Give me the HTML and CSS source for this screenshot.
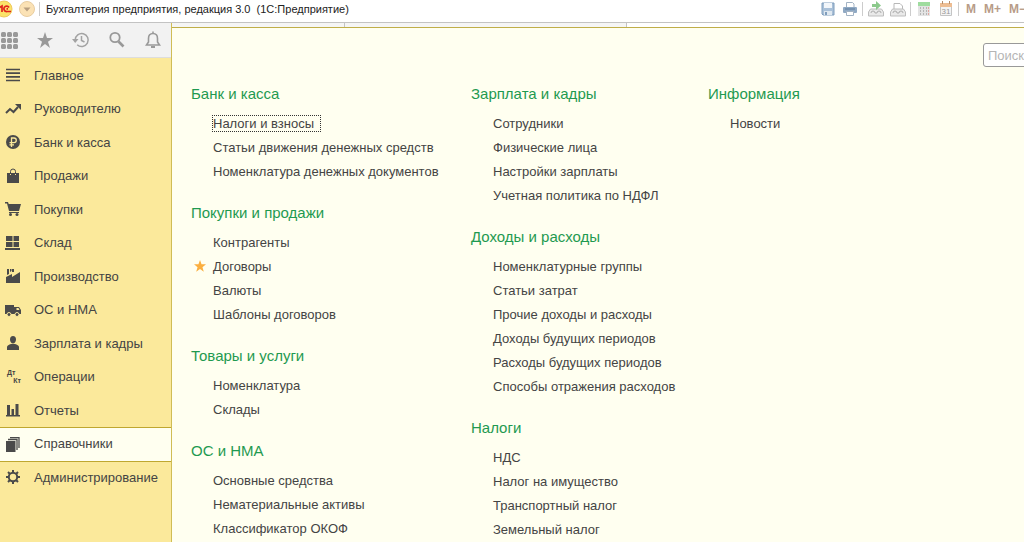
FILE: index.html
```html
<!DOCTYPE html>
<html lang="ru">
<head>
    <meta charset="UTF-8">
    <meta name="viewport" content="width=device-width, initial-scale=1.0">
    <title>Бухгалтерия предприятия</title>
    <link rel="stylesheet" href="styles.css">
</head>
<body>
<header class="titlebar">
    <svg class="logo" width="18" height="18" viewBox="0 0 18 18">
        <circle cx="9" cy="9" r="8" fill="#fbe36a" stroke="#f0c95c"/>
        <path d="M4.500 7.500L7 6v6M14 7.500a2.700 2.700 0 1 0-2 4h4M13 8.800h-1.500" fill="none" stroke="#e0231c" stroke-width="1.700"/>
    </svg>
    <button class="menu-btn" aria-label="Меню">
        <svg width="16" height="16" viewBox="0 0 16 16">
            <circle cx="8" cy="8" r="7.500" fill="#fbe2b5" stroke="#e8cda0"/>
            <path d="M4.500 6.500h7L8 10.500z" fill="#b89f80"/>
        </svg>
    </button>
    <span class="sep"></span>
    <h1>Бухгалтерия предприятия, редакция 3.0 &nbsp;(1С:Предприятие)</h1>
    <div class="tools">
        <button aria-label="Сохранить">
            <svg width="16" height="16" viewBox="0 0 16 16">
                <path d="M2 2h12v12H3l-1-1z" fill="#a9c0d8" stroke="#7f9dbc"/>
                <path d="M4 2h8v5H4z" fill="#f2f6fa"/>
                <path d="M4 10h8v4H4z" fill="#dfe8f0"/>
                <path d="M5 11h2v3H5z" fill="#7f9dbc"/>
            </svg>
        </button>
        <button aria-label="Печать">
            <svg width="16" height="16" viewBox="0 0 16 16">
                <path d="M4.500 6V1.500h6l1.500 1.500v3" fill="#fff" stroke="#a3b3c4"/>
                <rect x="1" y="6" width="14" height="6" rx="1" fill="#90a9c4"/>
                <path d="M3 8h10" stroke="#5d7b9b"/>
                <path d="M4.500 10.500h7v4h-7z" fill="#fff" stroke="#a3b3c4"/>
            </svg>
        </button>
        <span class="sep"></span>
        <button aria-label="Добавить в избранное">
            <svg width="16" height="16" viewBox="0 0 16 16">
                <path d="M2.500 8h11l2 3v4H.5v-4z" fill="#e9e9e9" stroke="#bdbdbd"/>
                <path d="M3 12a2 2 0 0 1 4 0h2a2 2 0 0 1 4 0" fill="none" stroke="#adadad"/>
                <path d="M4 3h4V0l5 4.500L8 9V6H4z" fill="#8cc98c"/>
            </svg>
        </button>
        <button aria-label="Ссылка">
            <svg width="16" height="16" viewBox="0 0 16 16">
                <path d="M4 9V2.500h6L12.500 5v4" fill="#fff" stroke="#b8b8b8"/>
                <path d="M2.500 8h11l2 3v4H.5v-4z" fill="#e9e9e9" stroke="#bdbdbd"/>
                <path d="M3 12a2 2 0 0 1 4 0h2a2 2 0 0 1 4 0" fill="none" stroke="#adadad"/>
            </svg>
        </button>
        <span class="sep"></span>
        <button aria-label="Калькулятор">
            <svg width="16" height="16" viewBox="0 0 16 16">
                <path d="M2 1h12v14H2z" fill="#e3e3e3"/>
                <path d="M2 1h12v4H2z" fill="#9fdc9f"/>
                <path d="M4.500 6v8M7.500 6v8M10.500 6v8" stroke="#b5b5b5" stroke-dasharray="2 1"/>
                <path d="M12.500 6v8" stroke="#e2a6a0" stroke-dasharray="2 1"/>
            </svg>
        </button>
        <button aria-label="Календарь">
            <svg width="16" height="16" viewBox="0 0 16 16">
                <path d="M2.500 2.500h11v12h-11z" fill="#f4f4f4" stroke="#c4c4c4"/>
                <path d="M2 2h12v4H2z" fill="#edbd93"/>
                <path d="M4.500 0v3M11.500 0v3" stroke="#b58d6c"/>
                <text x="8" y="13" class="cal-day">31</text>
            </svg>
        </button>
        <span class="sep"></span>
        <button class="mem">M</button>
        <button class="mem">M+</button>
        <button class="mem">M−</button>
    </div>
</header>

<div class="layout">
    <aside class="sidebar">
        <div class="quick">
            <button aria-label="Функции">
                <svg width="18" height="18" viewBox="0 0 18 18" fill="#999">
                    <rect x="1" y="1" width="5" height="5" rx="1.500"/><rect x="7" y="1" width="5" height="5" rx="1.500"/><rect x="13" y="1" width="5" height="5" rx="1.500"/>
                    <rect x="1" y="7" width="5" height="5" rx="1.500"/><rect x="7" y="7" width="5" height="5" rx="1.500"/><rect x="13" y="7" width="5" height="5" rx="1.500"/>
                    <rect x="1" y="13" width="5" height="5" rx="1.500"/><rect x="7" y="13" width="5" height="5" rx="1.500"/><rect x="13" y="13" width="5" height="5" rx="1.500"/>
                </svg>
            </button>
            <button aria-label="Избранное">
                <svg width="18" height="18" viewBox="0 0 18 18"><path d="M9 1l2 6h6l-5 3.700 2 6.300-5-3.900L4 17l2-6.300L1 7h6z" fill="#999"/></svg>
            </button>
            <button aria-label="История">
                <svg width="18" height="18" viewBox="0 0 18 18" fill="none" stroke="#a3a3a3" stroke-width="1.500">
                    <path d="M3.200 9a6.500 6.500 0 1 1 2 4.700M9.500 5v4.500l3 1.500"/>
                    <path d="M0 8h6.500L3.200 12z" fill="#a3a3a3" stroke="none"/>
                </svg>
            </button>
            <button aria-label="Поиск">
                <svg width="18" height="18" viewBox="0 0 18 18" fill="none" stroke="#999">
                    <circle cx="7" cy="6.500" r="4.700" stroke-width="1.800"/><path d="M10.500 10.500l5 5" stroke-width="2.600"/>
                </svg>
            </button>
            <button aria-label="Уведомления">
                <svg width="18" height="18" viewBox="0 0 18 18" fill="none" stroke="#999" stroke-width="1.600">
                    <path d="M9 2.500c-3 0-4.500 2-4.500 5V11L2.500 14h13l-2-3V7.500c0-3-1.500-5-4.500-5zM9 .5v2"/><path d="M7 16h4" stroke-width="2"/>
                </svg>
            </button>
        </div>
        <nav class="nav">
            <a href="#"><svg viewBox="0 0 16 16"><path d="M1 2.500h14M1 6.200h14M1 9.800h14M1 13.500h14" stroke="#4a4a4a" stroke-width="1.700"/></svg>Главное</a>
            <a href="#"><svg viewBox="0 0 16 16"><path d="M1 12l4-4 3.500 3L13 6" fill="none" stroke="#4a4a4a" stroke-width="2"/><path d="M10 3h6v6z"/></svg>Руководителю</a>
            <a href="#"><svg viewBox="0 0 16 16"><circle cx="8" cy="8" r="7"/><path d="M6.500 13V4H9a2.300 2.300 0 0 1 0 4.600H4.500M4.500 10.800H9" fill="none" stroke="#fbe99b" stroke-width="1.300"/></svg>Банк и касса</a>
            <a href="#"><svg viewBox="0 0 16 16"><path d="M2 5h3v2h1V5h4v2h1V5h3v10H2z"/><path d="M5.500 6V3.500a2.500 2.500 0 0 1 5 0V6" fill="none" stroke="#4a4a4a"/></svg>Продажи</a>
            <a href="#"><svg viewBox="0 0 16 16"><path d="M0 1h3l.7 2H16l-2 7H4L2 2.500H0zM4 11h10v1H4z"/><circle cx="5.500" cy="13.500" r="1.500"/><circle cx="12" cy="13.500" r="1.500"/></svg>Покупки</a>
            <a href="#"><svg viewBox="0 0 16 16"><path d="M1 1h6.500v5H1zM8.500 1H14v5H8.500zM1 7h6.500v5H1zM8.500 7H14v5H8.500zM0 13h15v2H0z"/></svg>Склад</a>
            <a href="#"><svg viewBox="0 0 16 16"><path d="M1 15V9l6-3v3l8-5v11zM2 1h2v5L2 7zM5 1h1.500v2L5 4zM7 1h2v3H7z"/></svg>Производство</a>
            <a href="#"><svg viewBox="0 0 16 16"><path d="M0 3h9v9H0zM10 5h4l2 3v4H9V5z"/><path d="M11.500 6h2l1 2h-3z" fill="#fbe99b"/><circle cx="4" cy="12.500" r="2" stroke="#fbe99b"/><circle cx="12" cy="12.500" r="2" stroke="#fbe99b"/></svg>ОС и НМА</a>
            <a href="#"><svg viewBox="0 0 16 16"><path d="M8 1c2 0 3 1.300 3 3.500S9.700 8.500 8 8.500 5 6.700 5 4.500 6 1 8 1zM2 15v-3c0-1.500 2-2.500 4-3h4c2 .5 4 1.500 4 3v3z"/></svg>Зарплата и кадры</a>
            <a href="#"><span class="dtkt"><span>Дт</span><span class="kt">Кт</span></span>Операции</a>
            <a href="#"><svg viewBox="0 0 16 16"><path d="M2 3h3v10H2zM6.500 7h2.500v6H6.500zM10.500 2h3v11h-3zM1 13h14v1.500H1z"/></svg>Отчеты</a>
            <a href="#" class="active"><svg viewBox="0 0 16 16"><path d="M1 5h9.500v11H1z"/><path d="M3 3.500h9V14M5 1.700h9V12" fill="none" stroke="#4a4a4a" stroke-width="1.300"/></svg>Справочники</a>
            <a href="#"><svg viewBox="0 0 16 16"><circle cx="8" cy="8" r="4.200" fill="none" stroke="#4a4a4a" stroke-width="2"/><path d="M8 1v3M8 12v3M1 8h3M12 8h3M3 3l2.200 2.200M10.800 10.800L13 13M13 3l-2.200 2.200M5.200 10.800L3 13" stroke="#4a4a4a" stroke-width="2"/></svg>Администрирование</a>
        </nav>
    </aside>

    <div class="content">
        <div class="tabs"><span class="tab first"></span><span class="tab second"></span><span class="tab rest"></span></div>
        <main class="panel">
            <div class="search-row"><input type="text" class="search" placeholder="Поиск" aria-label="Поиск"></div>
            <div class="columns">
                <div class="column wide">
                    <section>
                        <h2>Банк и касса</h2>
                        <ul>
                            <li><a href="#" class="focused">Налоги и взносы</a></li>
                            <li><a href="#">Статьи движения денежных средств</a></li>
                            <li><a href="#">Номенклатура денежных документов</a></li>
                        </ul>
                    </section>
                    <section>
                        <h2>Покупки и продажи</h2>
                        <ul>
                            <li><a href="#">Контрагенты</a></li>
                            <li><svg class="star" width="12" height="12" viewBox="0 0 18 18"><path d="M9 0l2.300 6.500H18l-5.300 4.200 2 6.800L9 13.400l-5.700 4.100 2-6.800L0 6.500h6.700z" fill="#fbaf3f"/></svg><a href="#">Договоры</a></li>
                            <li><a href="#">Валюты</a></li>
                            <li><a href="#">Шаблоны договоров</a></li>
                        </ul>
                    </section>
                    <section>
                        <h2>Товары и услуги</h2>
                        <ul>
                            <li><a href="#">Номенклатура</a></li>
                            <li><a href="#">Склады</a></li>
                        </ul>
                    </section>
                    <section>
                        <h2>ОС и НМА</h2>
                        <ul>
                            <li><a href="#">Основные средства</a></li>
                            <li><a href="#">Нематериальные активы</a></li>
                            <li><a href="#">Классификатор ОКОФ</a></li>
                        </ul>
                    </section>
                </div>
                <div class="column">
                    <section>
                        <h2>Зарплата и кадры</h2>
                        <ul>
                            <li><a href="#">Сотрудники</a></li>
                            <li><a href="#">Физические лица</a></li>
                            <li><a href="#">Настройки зарплаты</a></li>
                            <li><a href="#">Учетная политика по НДФЛ</a></li>
                        </ul>
                    </section>
                    <section>
                        <h2>Доходы и расходы</h2>
                        <ul>
                            <li><a href="#">Номенклатурные группы</a></li>
                            <li><a href="#">Статьи затрат</a></li>
                            <li><a href="#">Прочие доходы и расходы</a></li>
                            <li><a href="#">Доходы будущих периодов</a></li>
                            <li><a href="#">Расходы будущих периодов</a></li>
                            <li><a href="#">Способы отражения расходов</a></li>
                        </ul>
                    </section>
                    <section>
                        <h2>Налоги</h2>
                        <ul>
                            <li><a href="#">НДС</a></li>
                            <li><a href="#">Налог на имущество</a></li>
                            <li><a href="#">Транспортный налог</a></li>
                            <li><a href="#">Земельный налог</a></li>
                        </ul>
                    </section>
                </div>
                <div class="column">
                    <section>
                        <h2>Информация</h2>
                        <ul>
                            <li><a href="#">Новости</a></li>
                        </ul>
                    </section>
                </div>
            </div>
        </main>
    </div>
</div>
</body>
</html>
```
FILE: styles.css
```css
* { box-sizing: border-box; }
body { font-family: "Liberation Sans", Arial, sans-serif; font-size: 13px; color: #444; margin: 0; height: 100vh; display: flex; flex-direction: column; overflow: hidden; background: white; }
button { border: 0; padding: 0; background: none; font: inherit; display: flex; cursor: pointer; }
a { color: inherit; text-decoration: none; }

.titlebar { display: flex; align-items: center; height: 23px; flex: none; padding-bottom: 5px; border-bottom: 1px solid #c3c3c3; }
.logo { margin-left: -5px; flex: none; }
.menu-btn { margin-left: 6px; }
.titlebar h1 { font-size: 11px; font-weight: normal; margin: 0 0 0 6px; line-height: 18px; color: #222; white-space: nowrap; }
.sep { width: 1px; height: 14px; background: #ccc; }
.menu-btn + .sep { margin-left: 4px; }
.tools { display: flex; align-items: center; gap: 6px; margin-left: auto; margin-right: -2px; }
.tools .sep { margin: 0 -1px 0 -2px; }
.cal-day { font-size: 8px; text-anchor: middle; fill: #999; }
.mem { font-size: 12px; font-weight: bold; color: #b89c88; margin-left: 2px; }

.layout { display: flex; flex: 1; min-height: 0; }
.sidebar { width: 172px; flex: none; background: #fbe99b; border-right: 1px solid #d0bd55; }
.quick { display: flex; align-items: center; gap: 18px; height: 35px; background: #f2f2f2; border-bottom: 1px solid #ddd; }

.nav { padding-top: 1px; }
.nav a { display: flex; align-items: center; gap: 13px; height: 33px; padding: 0 0 2px 5px; border-top: 1px solid transparent; }
.nav a:nth-child(even) { height: 34px; }
.nav svg, .dtkt { width: 16px; height: 16px; fill: #4a4a4a; flex: none; }
.nav a.active { height: 35px; margin-bottom: -1px; background: #fffff0; border-top: 1px solid #bfa730; border-bottom: 1px solid #bfa730; }
.dtkt { display: flex; flex-direction: column; font-size: 7px; line-height: 8px; font-weight: bold; padding-left: 2px; }
.kt { align-self: flex-end; }

.content { flex: 1; min-width: 0; display: flex; flex-direction: column; }
.tabs { display: flex; height: 4px; flex: none; background: #f5f5f5; }
.tab { border-right: 1px solid #c3c3c3; }
.first { width: 173px; }
.second { width: 282px; }
.rest { flex: 1; border: 0; background: white; }
.panel { flex: 1; background: #fffff0; border-top: 1px solid #c0ae48; padding: 15px 0 0 19px; overflow: hidden; }
.search-row { display: flex; justify-content: flex-end; margin-right: -119px; }
.search { width: 160px; height: 24px; border: 1px solid #999; border-radius: 3px; background: white; padding: 0 4px; font: inherit; }
.search::placeholder { color: #b5b5b5; }

.columns { display: flex; margin-top: 15px; }
.column { flex: none; width: 237px; white-space: nowrap; }
.wide { width: 280px; }
section { margin-bottom: 17px; }
h2 { font-size: 15px; font-weight: normal; color: #1f9a50; margin: 0 0 6px; line-height: 24px; }
ul { list-style: none; margin: 0; padding: 0 0 0 22px; }
li { line-height: 24px; position: relative; }
.focused { outline: 1px dotted #333; padding-right: 6px; }
.star { position: absolute; left: -19px; top: 5px; }
```
